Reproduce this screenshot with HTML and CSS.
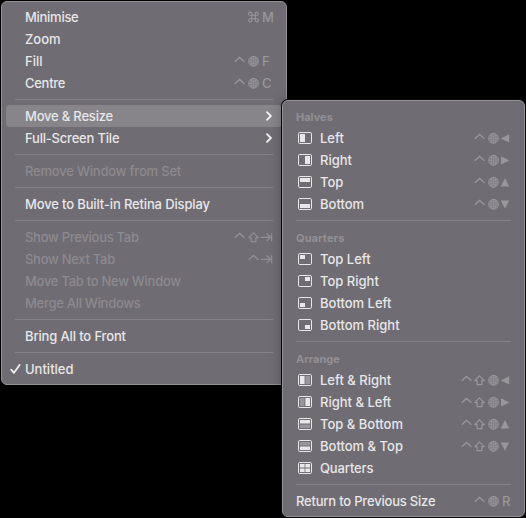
FILE: index.html
```html
<!DOCTYPE html>
<html lang="en">
<head>
<meta charset="utf-8">
<title>Window menu</title>
<link rel="stylesheet" href="styles.css">
</head>
<body>
<svg class="defs" width="0" height="0" aria-hidden="true">
  <symbol id="ctrl" viewBox="0 0 13 12"><path d="M1.8 6.8 6.6 2.4 11.4 6.8" fill="none" stroke="currentColor" stroke-width="1.3"/></symbol>
  <symbol id="shift" viewBox="0 -.3 13 12"><path d="M6.5 1.5 11.2 6.3H8.9V10.3H4.1V6.3H1.8Z" fill="none" stroke="currentColor" stroke-width="1.2" stroke-linejoin="round"/></symbol>
  <symbol id="tab" viewBox="0 -.3 13 12"><path d="M1 6H10.5M6.5 2.2 10.5 6 6.5 9.8M11.6 2V10" fill="none" stroke="currentColor" stroke-width="1.3"/></symbol>
  <symbol id="cmd" viewBox="0 0 13 12"><path d="M4.8 4.3H8.2V7.7H4.8ZM4.8 4.3H3.4A1.6 1.6 0 1 1 4.8 2.8ZM8.2 4.3H9.6A1.6 1.6 0 1 0 8.2 2.8ZM4.8 7.7H3.4A1.6 1.6 0 1 0 4.8 9.2ZM8.2 7.7H9.6A1.6 1.6 0 1 1 8.2 9.2Z" fill="none" stroke="currentColor" stroke-width="1.1"/></symbol>
  <symbol id="globe" viewBox="0 -.3 13 12"><circle cx="6.5" cy="6" r="4.9" fill="currentColor" fill-opacity=".35" stroke="currentColor" stroke-width=".9"/><path d="M6.5 1V11M1.6 6H11.4M2.8 3.2Q6.5 5 10.2 3.2M2.8 8.8Q6.5 7 10.2 8.8" fill="none" stroke="currentColor" stroke-width=".6"/><ellipse cx="6.5" cy="6" rx="2.5" ry="4.9" fill="none" stroke="currentColor" stroke-width=".8"/></symbol>
  <symbol id="left" viewBox="0 -.4 13 12"><path d="M.9 6 9.2 1.8V10.2Z" fill="currentColor"/></symbol>
  <symbol id="right" viewBox="0 -.4 13 12"><path d="M9.4 6 1 1.8V10.2Z" fill="currentColor"/></symbol>
  <symbol id="up" viewBox="0 -.4 13 12"><path d="M5 1.6 9.2 10H.8Z" fill="currentColor"/></symbol>
  <symbol id="down" viewBox="0 -.4 13 12"><path d="M5 10.4 9.2 2H.8Z" fill="currentColor"/></symbol>
  <symbol id="frame" viewBox="0 0 14 12"><rect x=".5" y=".5" width="13" height="11" rx="1.3" fill="none" stroke="currentColor"/></symbol>
</svg>

<div class="menu main">
  <div class="item"><span class="label tighter">Minimise</span><span class="keys"><svg><use href="#cmd"/></svg><b>M</b></span></div>
  <div class="item"><span class="label">Zoom</span></div>
  <div class="item"><span class="label">Fill</span><span class="keys"><svg><use href="#ctrl"/></svg><svg><use href="#globe"/></svg><b>F</b></span></div>
  <div class="item"><span class="label tighter">Centre</span><span class="keys"><svg><use href="#ctrl"/></svg><svg><use href="#globe"/></svg><b>C</b></span></div>
  <div class="sep"></div>
  <div class="item active"><span class="label tight">Move &amp; Resize</span><svg class="chevron" viewBox="0 0 8 10"><path d="M2 1.2 5.9 5 2 8.8"/></svg></div>
  <div class="item"><span class="label tight">Full-Screen Tile</span><svg class="chevron" viewBox="0 0 8 10"><path d="M2 1.2 5.9 5 2 8.8"/></svg></div>
  <div class="sep"></div>
  <div class="item off"><span class="label tight">Remove Window from Set</span></div>
  <div class="sep"></div>
  <div class="item"><span class="label slight">Move to Built-in Retina Display</span></div>
  <div class="sep"></div>
  <div class="item off"><span class="label tighter">Show Previous Tab</span><span class="keys"><svg><use href="#ctrl"/></svg><svg><use href="#shift"/></svg><svg><use href="#tab"/></svg></span></div>
  <div class="item off"><span class="label tighter">Show Next Tab</span><span class="keys"><svg><use href="#ctrl"/></svg><svg><use href="#tab"/></svg></span></div>
  <div class="item off"><span class="label tighter">Move Tab to New Window</span></div>
  <div class="item off"><span class="label tighter">Merge All Windows</span></div>
  <div class="sep"></div>
  <div class="item"><span class="label slight">Bring All to Front</span></div>
  <div class="sep"></div>
  <div class="item checked"><svg class="check" viewBox="0 0 11 10"><path d="M1.2 5.6 4 8.8 9.6 1"/></svg><span class="label">Untitled</span></div>
</div>

<div class="menu sub">
  <div class="heading">Halves</div>
  <div class="item"><svg class="tile"><use href="#frame"/><path d="M2 2h5v8H2z"/></svg><span class="label">Left</span><span class="keys"><svg><use href="#ctrl"/></svg><svg><use href="#globe"/></svg><svg><use href="#left"/></svg></span></div>
  <div class="item"><svg class="tile"><use href="#frame"/><path d="M7 2h5v8H7z"/></svg><span class="label">Right</span><span class="keys"><svg><use href="#ctrl"/></svg><svg><use href="#globe"/></svg><svg><use href="#right"/></svg></span></div>
  <div class="item"><svg class="tile"><use href="#frame"/><path d="M2 2h10v4H2z"/></svg><span class="label">Top</span><span class="keys"><svg><use href="#ctrl"/></svg><svg><use href="#globe"/></svg><svg><use href="#up"/></svg></span></div>
  <div class="item"><svg class="tile"><use href="#frame"/><path d="M2 6h10v4H2z"/></svg><span class="label">Bottom</span><span class="keys"><svg><use href="#ctrl"/></svg><svg><use href="#globe"/></svg><svg><use href="#down"/></svg></span></div>
  <div class="sep"></div>
  <div class="heading wide">Quarters</div>
  <div class="item"><svg class="tile"><use href="#frame"/><path d="M2 2h5v4H2z"/></svg><span class="label">Top Left</span></div>
  <div class="item"><svg class="tile"><use href="#frame"/><path d="M7 2h5v4H7z"/></svg><span class="label">Top Right</span></div>
  <div class="item"><svg class="tile"><use href="#frame"/><path d="M2 6h5v4H2z"/></svg><span class="label">Bottom Left</span></div>
  <div class="item"><svg class="tile"><use href="#frame"/><path d="M7 6h5v4H7z"/></svg><span class="label">Bottom Right</span></div>
  <div class="sep"></div>
  <div class="heading">Arrange</div>
  <div class="item"><svg class="tile"><use href="#frame"/><path d="M2 2h4.6v8H2z"/><path class="dim" d="M7.4 2H12v8H7.4z"/></svg><span class="label">Left &amp; Right</span><span class="keys"><svg><use href="#ctrl"/></svg><svg><use href="#shift"/></svg><svg><use href="#globe"/></svg><svg><use href="#left"/></svg></span></div>
  <div class="item"><svg class="tile"><use href="#frame"/><path d="M7.4 2H12v8H7.4z"/><path class="dim" d="M2 2h4.6v8H2z"/></svg><span class="label">Right &amp; Left</span><span class="keys"><svg><use href="#ctrl"/></svg><svg><use href="#shift"/></svg><svg><use href="#globe"/></svg><svg><use href="#right"/></svg></span></div>
  <div class="item"><svg class="tile"><use href="#frame"/><path d="M2 2h10v3.5H2z"/><path class="dim" d="M2 6.5h10V10H2z"/></svg><span class="label">Top &amp; Bottom</span><span class="keys"><svg><use href="#ctrl"/></svg><svg><use href="#shift"/></svg><svg><use href="#globe"/></svg><svg><use href="#up"/></svg></span></div>
  <div class="item"><svg class="tile"><use href="#frame"/><path d="M2 6.5h10V10H2z"/><path class="dim" d="M2 2h10v3.5H2z"/></svg><span class="label">Bottom &amp; Top</span><span class="keys"><svg><use href="#ctrl"/></svg><svg><use href="#shift"/></svg><svg><use href="#globe"/></svg><svg><use href="#down"/></svg></span></div>
  <div class="item"><svg class="tile"><use href="#frame"/><path d="M2 2h4.6v3.5H2zM7.4 2H12v3.5H7.4zM2 6.5h4.6V10H2zM7.4 6.5H12V10H7.4z"/></svg><span class="label slight">Quarters</span></div>
  <div class="sep"></div>
  <div class="item"><span class="label tight">Return to Previous Size</span><span class="keys"><svg><use href="#ctrl"/></svg><svg><use href="#globe"/></svg><b>R</b></span></div>
</div>
</body>
</html>
```
FILE: styles.css
```css
body {
  margin: 0;
  width: 526px;
  height: 518px;
  overflow: hidden;
  position: relative;
  background: #000;
  color: #e8e7e9;
  font: 500 13px/23px Inter, "Liberation Sans", sans-serif;
}

.defs { position: absolute; }

.menu {
  position: absolute;
  box-sizing: border-box;
  padding: 4px;
  border: 1px solid #939196;
  border-radius: 6px;
  background: #6f6c73;
}

.main { left: 1px; top: 1px; width: 286px; height: 384px; }

.sub {
  left: 282px;
  top: 100px;
  width: 243px;
  height: 417px;
  box-shadow: 0 0 0 1px #09090a, 0 0 12px rgba(0, 0, 0, .3);
}

.item {
  display: flex;
  align-items: center;
  height: 22px;
  white-space: nowrap;
}

.main .item { padding: 0 9px 0 19px; }
.sub .item { padding: 0 7px 0 9px; }
.active { background: #87858a; border-radius: 4px; }
.off { color: #8d8a90; }
.main .checked { padding-left: 4px; }

.slight { letter-spacing: -.14px; }
.tight { letter-spacing: -.2px; }
.tighter { letter-spacing: -.28px; }

.sep {
  height: 1px;
  margin: 5px 9px;
  background: #85828a;
}

.heading {
  height: 22px;
  line-height: 24px;
  padding-left: 9px;
  color: #929095;
  font-size: 11px;
  font-weight: 700;
}

.wide { letter-spacing: .1px; }

.keys {
  display: flex;
  align-items: center;
  margin-left: auto;
  color: #99979c;
}

.off .keys { color: #929095; }
.keys svg { width: 13px; height: 12px; margin-right: .5px; }
.keys svg:last-child { margin-right: 0; }
.keys b { width: 11px; padding-left: 2px; font-weight: 500; }

.chevron { width: 8px; height: 10px; margin-left: auto; }
.chevron path, .check path {
  fill: none;
  stroke: #f0f0f1;
  stroke-width: 1.8;
  stroke-linecap: round;
  stroke-linejoin: round;
}
.check { width: 11px; height: 10px; margin-right: 4px; }

.tile { width: 14px; height: 12px; margin: 0 8px 0 2px; fill: currentColor; }
.dim { opacity: .35; }
```
